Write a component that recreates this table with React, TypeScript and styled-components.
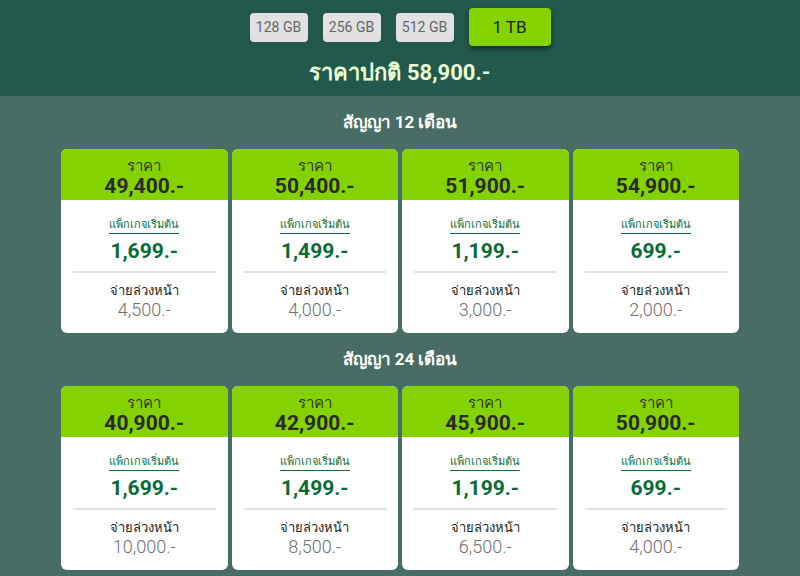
import React from "react";
import styled, { createGlobalStyle } from "styled-components";

const GlobalStyle = createGlobalStyle`
  body {
    margin: 0;
    background: #486d65;
    font-family: Roboto, "Noto Sans", "Liberation Sans", sans-serif;
  }
`;

type Plan = { price: string; pack: string; down: string };

const sizes = ["128 GB", "256 GB", "512 GB", "1 TB"];

const contracts: { months: number; plans: Plan[] }[] = [
  {
    months: 12,
    plans: [
      { price: "49,400.-", pack: "1,699.-", down: "4,500.-" },
      { price: "50,400.-", pack: "1,499.-", down: "4,000.-" },
      { price: "51,900.-", pack: "1,199.-", down: "3,000.-" },
      { price: "54,900.-", pack: "699.-", down: "2,000.-" },
    ],
  },
  {
    months: 24,
    plans: [
      { price: "40,900.-", pack: "1,699.-", down: "10,000.-" },
      { price: "42,900.-", pack: "1,499.-", down: "8,500.-" },
      { price: "45,900.-", pack: "1,199.-", down: "6,500.-" },
      { price: "50,900.-", pack: "699.-", down: "4,000.-" },
    ],
  },
];

const App: React.FC = () => {
  return (
    <Page>
      <GlobalStyle />
      <Header>
        <Sizes>
          {sizes.map((s) => (
            <SizeButton key={s} active={s === "1 TB"}>
              {s}
            </SizeButton>
          ))}
        </Sizes>
        <Normal>ราคาปกติ 58,900.-</Normal>
      </Header>
      {contracts.map((c) => (
        <Section key={c.months}>
          <SectionTitle>สัญญา {c.months} เดือน</SectionTitle>
          <Cards>
            {c.plans.map((p, i) => (
              <Card key={i}>
                <CardTop>
                  <Label>ราคา</Label>
                  <Price>{p.price}</Price>
                </CardTop>
                <CardBody>
                  <PackLink>แพ็กเกจเริ่มต้น</PackLink>
                  <PackPrice>{p.pack}</PackPrice>
                  <Divider />
                  <DownLabel>จ่ายล่วงหน้า</DownLabel>
                  <DownPrice>{p.down}</DownPrice>
                </CardBody>
              </Card>
            ))}
          </Cards>
        </Section>
      ))}
    </Page>
  );
};

export default App;

const Page = styled.div`
  width: 800px;
  min-height: 576px;
  background: #486d65;
`;

const Header = styled.div`
  background: #23584c;
  height: 96px;
  box-sizing: border-box;
  padding-top: 8px;
  display: flex;
  flex-direction: column;
  align-items: center;
`;

const Sizes = styled.div`
  display: flex;
  align-items: center;
  gap: 15px;
  height: 38px;
`;

const SizeButton = styled.div<{ active?: boolean }>`
  display: flex;
  align-items: center;
  justify-content: center;
  border-radius: 4px;
  width: ${(p) => (p.active ? "82px" : "58px")};
  height: ${(p) => (p.active ? "38px" : "29px")};
  background: ${(p) => (p.active ? "#84d300" : "#e1e1e1")};
  color: ${(p) => (p.active ? "#222" : "#666")};
  font-size: ${(p) => (p.active ? "17px" : "14px")};
  box-shadow: ${(p) => (p.active ? "0 3px 5px rgba(0,0,0,0.45)" : "none")};
`;

const Normal = styled.div`
  margin-top: 13px;
  color: #eaffd2;
  font-size: 22px;
  font-weight: bold;
  line-height: 28px;
`;

const Section = styled.div`
  display: flex;
  flex-direction: column;
  align-items: center;
`;

const SectionTitle = styled.div`
  color: #fff;
  font-size: 17px;
  font-weight: bold;
  line-height: 24px;
  margin: 14px 0 15px;
`;

const Cards = styled.div`
  width: 678px;
  display: grid;
  grid-template-columns: repeat(4, 1fr);
  gap: 4px;
`;

const Card = styled.div`
  border-radius: 6px;
  overflow: hidden;
  background: #fff;
  display: flex;
  flex-direction: column;
`;

const CardTop = styled.div`
  background: #84d300;
  height: 51px;
  display: flex;
  flex-direction: column;
  align-items: center;
  justify-content: center;
  padding-top: 5px;
  box-sizing: border-box;
`;

const Label = styled.div`
  font-size: 15px;
  line-height: 18px;
  color: #333;
`;

const Price = styled.div`
  font-size: 21px;
  line-height: 22px;
  font-weight: bold;
  color: #2a2a2a;
`;

const CardBody = styled.div`
  height: 133px;
  display: flex;
  flex-direction: column;
  align-items: center;
  padding: 17px 12px 0;
  box-sizing: border-box;
`;

const PackLink = styled.div`
  font-size: 11px;
  line-height: 16px;
  color: #0f6b3a;
  border-bottom: 1px solid #0f6b3a;
`;

const PackPrice = styled.div`
  margin-top: 5px;
  font-size: 21px;
  line-height: 24px;
  font-weight: bold;
  color: #0b6b38;
`;

const Divider = styled.div`
  align-self: stretch;
  height: 2px;
  background: #e2e2e2;
  margin: 8px 0 10px;
`;

const DownLabel = styled.div`
  font-size: 13px;
  line-height: 16px;
  color: #222;
`;

const DownPrice = styled.div`
  font-size: 18px;
  line-height: 22px;
  font-weight: 300;
  color: #707070;
`;
